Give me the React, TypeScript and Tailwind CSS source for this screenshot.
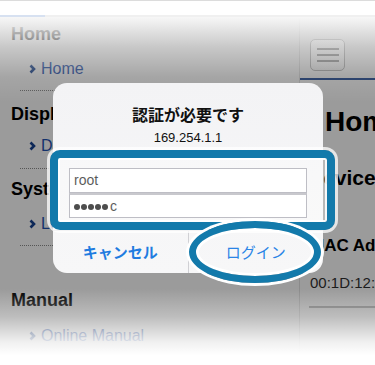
const latin = '"Liberation Sans", "Noto Sans CJK JP", Arial, sans-serif';
const jp = '"Noto Sans CJK JP", "Liberation Sans", sans-serif';

function Chevron() {
  return (
    <svg width="7" height="10" viewBox="0 0 7 10" className="shrink-0">
      <polyline points="1.5,1.5 5,5 1.5,8.5" fill="none" stroke="#0d2858" strokeWidth="2.6" />
    </svg>
  );
}

function NavLink({ label }: { label: string }) {
  return (
    <div className="flex items-center gap-[5px] pl-[29px] text-[16px] leading-[20px] text-[#13316b]">
      <Chevron />
      <span>{label}</span>
    </div>
  );
}

function Dotted({ className }: { className?: string }) {
  return <div className={`ml-[20px] mr-[10px] border-t border-dotted border-[#555] ${className ?? ''}`} />;
}

export default function App() {
  return (
    <div className="relative w-[375px] h-[365px] overflow-hidden bg-white" style={{ fontFamily: latin }}>
      {/* browser top strip */}
      <div className="h-[15px] border-t border-[#dcdcdc] bg-white" />
      <div className="flex h-[2px]">
        <div className="w-[45px] bg-[#d7e1f1]" />
        <div className="flex-1 bg-[#f0f0f0]" />
      </div>

      {/* page under the dim */}
      <div className="flex h-[348px] bg-[#9b9b9b]">
        <aside className="w-[300px] border-r border-[#8a8a8a]">
          <h2 className="mt-[6px] pl-[11px] text-[18px] leading-[22px] font-bold text-black">Home</h2>
          <div className="mt-[14px]"><NavLink label="Home" /></div>
          <Dotted className="mt-[11px]" />
          <h2 className="mt-[12px] pl-[11px] text-[18px] leading-[22px] font-bold text-black">Display</h2>
          <div className="mt-[11px]"><NavLink label="Device Status" /></div>
          <Dotted className="mt-[12px]" />
          <h2 className="mt-[9px] pl-[11px] text-[18px] leading-[22px] font-bold text-black">System</h2>
          <div className="mt-[14px]"><NavLink label="Log" /></div>
          <Dotted className="mt-[11px]" />
          <h2 className="mt-[43px] pl-[11px] text-[18px] leading-[22px] font-bold text-black">Manual</h2>
          <div className="mt-[15px]"><NavLink label="Online Manual" /></div>
          <Dotted className="mt-[11px]" />
        </aside>

        <main className="flex-1 min-w-0 overflow-hidden">
          <div className="mt-[22px] ml-[10px] flex h-[32px] w-[35px] flex-col items-center justify-center gap-[4px] rounded-[5px] border border-[#6e6e6e] bg-[linear-gradient(#a9a9a9,#979797)]">
            <span className="h-[2px] w-[22px] bg-[#5a5a5a]" />
            <span className="h-[2px] w-[22px] bg-[#5a5a5a]" />
            <span className="h-[2px] w-[22px] bg-[#5a5a5a]" />
          </div>
          <div className="mt-[7px] h-[2px] bg-[#17305e]" />
          <h1 className="mt-[26px] ml-[25px] whitespace-nowrap text-[28px] leading-[32px] font-bold text-black">Home</h1>
          <h3 className="mt-[28px] ml-[8px] whitespace-nowrap text-[21px] leading-[24px] font-bold text-black">Device</h3>
          <div className="mt-[46px] ml-[10px] whitespace-nowrap text-[17px] leading-[20px] font-bold text-black">MAC Address</div>
          <div className="mt-[18px] ml-[10px] whitespace-nowrap text-[15px] leading-[18px] text-[#1c1c1c]">00:1D:12:AB:34:CD</div>
          <div className="mt-[14px] ml-[9px] h-[2px] bg-[#6f6f6f]" />
          <div className="mt-[46px] ml-[12px] h-[3px] w-[16px] bg-[#8c8c8c]" />
        </main>
      </div>

      {/* vignette */}
      <div className="pointer-events-none absolute inset-x-0 top-[17px] bottom-0 bg-[linear-gradient(to_bottom,rgba(250,250,250,0.97)_0px,rgba(255,255,255,0.45)_30px,rgba(255,255,255,0.1)_60px,rgba(255,255,255,0)_85px,rgba(255,255,255,0)_272px,rgba(255,255,255,0.35)_300px,rgba(255,255,255,0.85)_325px,#fff_338px)]" />

      {/* auth dialog */}
      <div
        className="absolute left-[53px] top-[83px] w-[270px] h-[190px] overflow-hidden rounded-[14px] bg-[linear-gradient(to_bottom,#f3f3f5,#f7f7f8)]"
        style={{ fontFamily: jp }}
      >
        <div className="pt-[21px] text-center text-[16px] leading-[20px] font-bold text-[#111]">認証が必要です</div>
        <div className="mt-[6px] text-center text-[13px] leading-[16px] text-[#111]" style={{ fontFamily: latin }}>
          169.254.1.1
        </div>
        <div className="mx-[16px] mt-[22px]" style={{ fontFamily: latin }}>
          <div className="flex h-[25px] items-center border border-[#a3a3ad] bg-white pl-[4px] text-[14px] text-[#111]">root</div>
          <div className="flex h-[25px] items-center gap-[1px] border border-t-[2px] border-[#a3a3ad] border-t-[#b0b0b8] bg-white pl-[4px] text-[#111]">
            <span className="mt-[2px] h-[6px] w-[6px] rounded-full bg-black" />
            <span className="mt-[2px] h-[6px] w-[6px] rounded-full bg-black" />
            <span className="mt-[2px] h-[6px] w-[6px] rounded-full bg-black" />
            <span className="mt-[2px] h-[6px] w-[6px] rounded-full bg-black" />
            <span className="mt-[2px] h-[6px] w-[6px] rounded-full bg-black" />
            <span className="ml-[1px] text-[14px]">c</span>
          </div>
        </div>
        <div className="mt-[12px] h-px bg-[#d0d0d4]" />
        <div className="flex h-[43px]">
          <div className="flex flex-1 items-center justify-center text-[15px] font-bold text-[#1f7ce0]">キャンセル</div>
          <div className="w-px bg-[#d0d0d4]" />
          <div className="flex flex-1 items-center justify-center text-[15px] text-[#2a84e6]">ログイン</div>
        </div>
      </div>

      {/* annotation: highlight box around fields */}
      <div className="pointer-events-none absolute left-[50px] top-[150px] w-[285px] h-[80px] rounded-[10px] border-[8px] border-[#137aab] bg-white/30 shadow-[0_0_0_3px_rgba(255,255,255,0.75),inset_0_0_0_2px_rgba(255,255,255,0.9)]" />

      {/* annotation: ellipse around login */}
      <div className="pointer-events-none absolute left-[189px] top-[221px] w-[132px] h-[62px] rounded-[50%] border-[7px] border-[#137aab] shadow-[0_0_0_3px_#fff,inset_0_0_0_3px_#fff]" />
    </div>
  );
}
